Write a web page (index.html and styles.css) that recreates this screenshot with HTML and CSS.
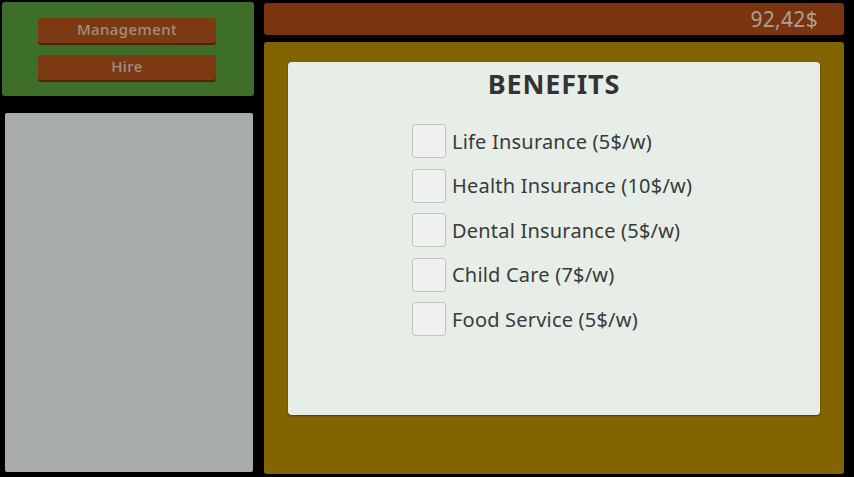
FILE: index.html
```html
<!DOCTYPE html>
<html lang="en">
<head>
    <meta charset="UTF-8">
    <meta name="viewport" content="width=device-width, initial-scale=1.0">
    <title>Benefits</title>
    <link rel="stylesheet" href="styles.css">
</head>
<body>

<div class="left-column">
    <div class="menu-panel">
        <button class="menu-button">Management</button>
        <button class="menu-button">Hire</button>
    </div>
    <div class="list-panel"></div>
</div>

<div class="right-column">
    <div class="money-bar">92,42$</div>
    <div class="content-panel">
        <div class="benefits-card">
            <h2>BENEFITS</h2>
            <div class="benefit-list">
                <label class="benefit"><span class="box"></span>Life Insurance (5$/w)</label>
                <label class="benefit"><span class="box"></span>Health Insurance (10$/w)</label>
                <label class="benefit"><span class="box"></span>Dental Insurance (5$/w)</label>
                <label class="benefit"><span class="box"></span>Child Care (7$/w)</label>
                <label class="benefit"><span class="box"></span>Food Service (5$/w)</label>
            </div>
        </div>
    </div>
</div>

</body>
</html>
```

FILE: styles.css
```css
body {
    margin: 0;
    background: #000;
    font-family: "Noto Sans", sans-serif;
    display: flex;
    height: 477px;
    overflow: hidden;
}
.left-column {
    width: 252px;
    padding-left: 2px;
    padding-top: 2px;
}
.menu-panel {
    background: #3e6f29;
    height: 94px;
    border-radius: 3px;
    display: flex;
    flex-direction: column;
    align-items: center;
    padding-top: 16px;
    box-sizing: border-box;
    gap: 12px;
}
.menu-button {
    width: 178px;
    height: 25px;
    margin-left: -2px;
    background: #7d3a12;
    border: none;
    border-radius: 3px;
    box-shadow: 0 2px 0 #4e250b;
    color: #a08f82;
    font-family: inherit;
    font-size: 15px;
    font-weight: 500;
    letter-spacing: 0.4px;
    padding: 0 0 4px;
}
.list-panel {
    background: #a8aca8;
    margin-top: 17px;
    margin-left: 3px;
    width: 248px;
    height: 359px;
    border-radius: 2px;
}
.right-column {
    margin-left: 10px;
    width: 580px;
    padding-top: 3px;
}
.money-bar {
    background: #7a3510;
    height: 32px;
    border-radius: 3px;
    color: #a8a196;
    font-size: 21px;
    letter-spacing: 0.3px;
    text-align: right;
    line-height: 32px;
    padding-right: 26px;
}
.content-panel {
    background: #826400;
    margin-top: 7px;
    height: 432px;
    border-radius: 3px;
    padding: 20px 24px 0;
    box-sizing: border-box;
}
.benefits-card {
    background: #e7eee8;
    height: 353px;
    border-radius: 4px;
    box-shadow: 0 1px 2px rgba(0, 0, 0, 0.4);
    display: flex;
    flex-direction: column;
    align-items: center;
}
.benefits-card h2 {
    margin: 6px 0 0;
    font-size: 27px;
    letter-spacing: 0.8px;
    color: #333;
    font-weight: bold;
    line-height: 32px;
}
.benefit-list {
    margin-top: 24px;
    display: flex;
    flex-direction: column;
    gap: 10.5px;
    align-self: flex-start;
    margin-left: 124px;
}
.benefit {
    display: flex;
    align-items: center;
    gap: 6px;
    font-size: 20px;
    letter-spacing: 0.2px;
    color: #3a3a3a;
}
.box {
    width: 32px;
    height: 32px;
    background: #eff1ef;
    border: 1px solid #c2c4c2;
    border-radius: 3px;
}
```
